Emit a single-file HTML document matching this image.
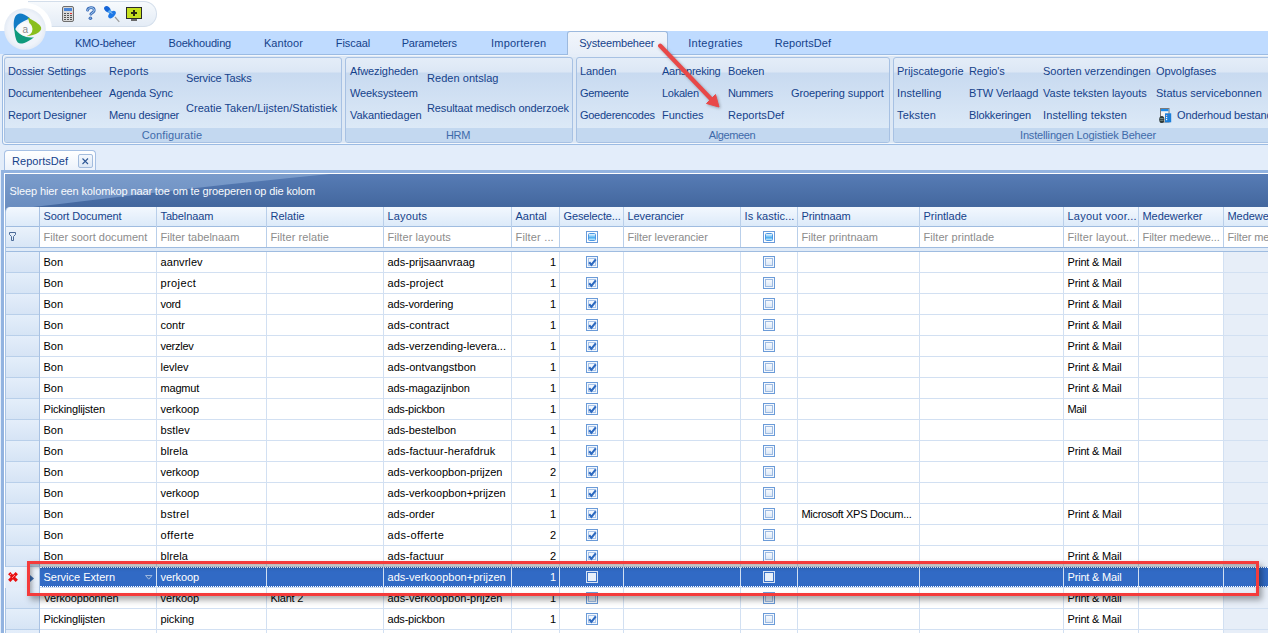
<!DOCTYPE html>
<html><head><meta charset="utf-8"><title>ReportsDef</title><style>
*{margin:0;padding:0;box-sizing:border-box}
html,body{width:1268px;height:633px;overflow:hidden;background:#fff;font-family:"Liberation Sans", sans-serif;font-size:11px}
.a{position:absolute;white-space:nowrap}
.t{position:absolute;white-space:nowrap;line-height:13px;height:13px}
.rb{color:#15428B;letter-spacing:-0.25px}
</style></head>
<body>
<div class="a" style="left:0;top:0;width:1268px;height:31px;background:#fff;overflow:hidden"><div class="a" style="left:28px;top:1px;width:129px;height:26px;border:1px solid #D3DEEB;border-left:none;border-radius:0 13px 13px 0;background:linear-gradient(#F7FAFD,#E4ECF6)"></div><div class="a" style="left:-1px;top:3px;width:53px;height:53px;border-radius:50%;background:#fff"></div></div><svg class="a" style="left:60px;top:5px" width="90" height="18" viewBox="0 0 90 18">
<rect x="2.5" y="1.5" width="11" height="15" rx="1.5" fill="#D8D8D8" stroke="#6E6E6E"/>
<rect x="4" y="3" width="8" height="3" fill="#4A86D8"/>
<g fill="#555"><rect x="4" y="8" width="2" height="1"/><rect x="7" y="8" width="2" height="1"/><rect x="10" y="8" width="2" height="1" fill="#E03030"/>
<rect x="4" y="10" width="2" height="1"/><rect x="7" y="10" width="2" height="1"/><rect x="10" y="10" width="2" height="1"/>
<rect x="4" y="12" width="2" height="1"/><rect x="7" y="12" width="2" height="1"/><rect x="10" y="12" width="2" height="1"/>
<rect x="4" y="14" width="2" height="1"/><rect x="7" y="14" width="2" height="1"/><rect x="10" y="14" width="2" height="1"/></g>
<path d="M27.5 5.2 C28 2.3 33.5 1.5 34.2 4.8 C34.7 7.5 31.2 7.6 30.8 9.2" fill="none" stroke="#3C6CB8" stroke-width="2.8" stroke-linecap="round"/>
<path d="M27.5 5.2 C28 2.3 33.5 1.5 34.2 4.8 C34.7 7.5 31.2 7.6 30.8 9.2" fill="none" stroke="#B5DAF6" stroke-width="1" stroke-linecap="round"/>
<circle cx="30.4" cy="13.3" r="1.8" fill="#3C6CB8"/><circle cx="30.2" cy="13.1" r="0.7" fill="#B5DAF6"/>
<line x1="55" y1="12" x2="59.3" y2="16.8" stroke="#9A9A9A" stroke-width="1.2"/>
<ellipse cx="47.3" cy="4.2" rx="3.6" ry="2.6" transform="rotate(45 47.3 4.2)" fill="#1565D8"/>
<path d="M47.5 6.5 L50 4.5 L53.5 8 L51 10.5 Z" fill="#4DA3F0"/>
<ellipse cx="52" cy="9.6" rx="4.6" ry="2.6" transform="rotate(-45 52 9.6)" fill="#1E78E6"/>
<path d="M50 6.5 L52.2 8.7" stroke="#D8F0FF" stroke-width="0.8"/>
<rect x="66.5" y="2.5" width="15" height="11" fill="#C6E01E" stroke="#2A2A2A"/>
<path d="M73 5h2v2h2v2h-2v2h-2v-2h-2V7h2z" fill="#2A2A10"/>
<rect x="71" y="14" width="6" height="2" fill="#6A6A6A"/>
</svg><svg class="a" style="left:0;top:0;z-index:5" width="50" height="55" viewBox="0 0 50 55">
<defs><radialGradient id="lg" cx="50%" cy="50%" r="50%"><stop offset="80%" stop-color="#EFF3FA"/><stop offset="100%" stop-color="#E4EBF5"/></radialGradient></defs>
<circle cx="25" cy="29" r="20.8" fill="url(#lg)"/>
<path d="M14.5 31 C13 24 13.5 16.5 17.5 14.2 C20.5 12.5 25 14.5 30 18.2 C26 20 21 22 18 25 C16.5 26.5 15.5 28.5 14.5 31 Z" fill="#127CC6"/>
<path d="M27.5 17.5 C32 19.5 37.5 22.5 40.2 25.8 C42 28 41.5 30.5 38.5 32.5 C35.5 34.5 30.5 36 26.5 36.2 C30 32.5 31 24 27.5 17.5 Z" fill="#8ABF1E"/>
<path d="M14.2 27.5 C14.5 33 15.5 40 17.8 42.5 C20 44.5 24 43.5 28 41.2 C30.5 39.8 32.5 38.5 34 37.2 C27 38.5 19 35.5 14.2 27.5 Z" fill="#0F9A7C"/>
<circle cx="25.5" cy="29" r="7" fill="#FAFBFC"/>
<text x="25.3" y="32.5" text-anchor="middle" font-family="Liberation Sans" font-size="10" fill="#8A8A8A">a</text>
</svg><div class="a" style="left:0;top:31px;width:1268px;height:24px;background:#BFDBFF"></div><div class="a" style="left:567px;top:31px;width:101px;height:27px;border:1px solid #9CB9DE;border-bottom:none;border-radius:3px 3px 0 0;background:linear-gradient(#F1F5FB,#E5EDF8)"></div><div class="t rb" style="left:75.0px;top:37px;letter-spacing:-0.222px">KMO-beheer</div><div class="t rb" style="left:168.5px;top:37px;letter-spacing:-0.15px">Boekhouding</div><div class="t rb" style="left:263.9px;top:37px;letter-spacing:0.083px">Kantoor</div><div class="t rb" style="left:335.8px;top:37px;letter-spacing:-0.083px">Fiscaal</div><div class="t rb" style="left:401.7px;top:37px;letter-spacing:-0.167px">Parameters</div><div class="t rb" style="left:491.0px;top:37px;letter-spacing:0.222px">Importeren</div><div class="t rb" style="left:579.2px;top:37px;letter-spacing:-0.15px">Systeembeheer</div><div class="t rb" style="left:688.2px;top:37px;letter-spacing:0.3px">Integraties</div><div class="t rb" style="left:774.8px;top:37px;letter-spacing:0.056px">ReportsDef</div><div class="a" style="left:0;top:54px;width:4px;height:92px;background:#E3EDFA"></div><div class="a" style="left:2px;top:54px;width:1270px;height:91px;border:1px solid #9BBBE3;border-radius:3px;background:#DDE8F5"></div><div class="a" style="left:3px;top:55px;width:1270px;height:89px;border:1px solid #F3F7FC;border-radius:3px"></div><div class="a" style="left:568px;top:54px;width:99px;height:3px;background:#E5EDF8"></div><div class="a" style="left:4px;top:57px;width:338px;height:86px;border:1px solid #A7C1E3;border-radius:3px;overflow:hidden;background:linear-gradient(#E4EDF8 0,#DCE7F5 14px,#C8DAF0 15px,#DCE9F7 70px)"><div class="a" style="left:0;top:70px;width:100%;height:15px;background:#C3D8F0"></div></div><div class="a" style="left:345px;top:57px;width:228px;height:86px;border:1px solid #A7C1E3;border-radius:3px;overflow:hidden;background:linear-gradient(#E4EDF8 0,#DCE7F5 14px,#C8DAF0 15px,#DCE9F7 70px)"><div class="a" style="left:0;top:70px;width:100%;height:15px;background:#C3D8F0"></div></div><div class="a" style="left:576px;top:57px;width:314px;height:86px;border:1px solid #A7C1E3;border-radius:3px;overflow:hidden;background:linear-gradient(#E4EDF8 0,#DCE7F5 14px,#C8DAF0 15px,#DCE9F7 70px)"><div class="a" style="left:0;top:70px;width:100%;height:15px;background:#C3D8F0"></div></div><div class="a" style="left:893px;top:57px;width:398px;height:86px;border:1px solid #A7C1E3;border-radius:3px;overflow:hidden;background:linear-gradient(#E4EDF8 0,#DCE7F5 14px,#C8DAF0 15px,#DCE9F7 70px)"><div class="a" style="left:0;top:70px;width:100%;height:15px;background:#C3D8F0"></div></div><div class="t" style="left:72px;width:200px;text-align:center;top:129px;color:#3E6AAA;letter-spacing:0.091px">Configuratie</div><div class="t" style="left:358px;width:200px;text-align:center;top:129px;color:#3E6AAA;letter-spacing:-0.4px">HRM</div><div class="t" style="left:632px;width:200px;text-align:center;top:129px;color:#3E6AAA;letter-spacing:-0.357px">Algemeen</div><div class="t" style="left:988px;width:200px;text-align:center;top:129px;color:#3E6AAA;letter-spacing:-0.161px">Instellingen Logistiek Beheer</div><div class="t rb" style="left:8px;top:65px;letter-spacing:-0.133px">Dossier Settings</div><div class="t rb" style="left:8px;top:87px;letter-spacing:-0.167px">Documentenbeheer</div><div class="t rb" style="left:8px;top:109px;letter-spacing:-0.107px">Report Designer</div><div class="t rb" style="left:109px;top:65px;letter-spacing:0.167px">Reports</div><div class="t rb" style="left:109px;top:87px;letter-spacing:-0.15px">Agenda Sync</div><div class="t rb" style="left:109px;top:109px;letter-spacing:-0.208px">Menu designer</div><div class="t rb" style="left:186px;top:72px;letter-spacing:-0.167px">Service Tasks</div><div class="t rb" style="left:186px;top:102px;letter-spacing:0.032px">Creatie Taken/Lijsten/Statistiek</div><div class="t rb" style="left:350px;top:65px;letter-spacing:-0.091px">Afwezigheden</div><div class="t rb" style="left:350px;top:87px;letter-spacing:-0.1px">Weeksysteem</div><div class="t rb" style="left:350px;top:109px;letter-spacing:-0.083px">Vakantiedagen</div><div class="t rb" style="left:427px;top:72px;letter-spacing:0.042px">Reden ontslag</div><div class="t rb" style="left:427px;top:102px;letter-spacing:-0.115px">Resultaat medisch onderzoek</div><div class="t rb" style="left:580px;top:65px;letter-spacing:-0.08px">Landen</div><div class="t rb" style="left:580px;top:87px;letter-spacing:-0.357px">Gemeente</div><div class="t rb" style="left:580px;top:109px;letter-spacing:-0.275px">Goederencodes</div><div class="t rb" style="left:662px;top:65px;letter-spacing:-0.25px">Aanspreking</div><div class="t rb" style="left:662px;top:87px;letter-spacing:-0.25px">Lokalen</div><div class="t rb" style="left:662px;top:109px;letter-spacing:0.0px">Functies</div><div class="t rb" style="left:728px;top:65px;letter-spacing:-0.2px">Boeken</div><div class="t rb" style="left:728px;top:87px;letter-spacing:-0.4px">Nummers</div><div class="t rb" style="left:728px;top:109px;letter-spacing:0.056px">ReportsDef</div><div class="t rb" style="left:791px;top:87px;letter-spacing:-0.118px">Groepering support</div><div class="t rb" style="left:897px;top:65px;letter-spacing:0.0px">Prijscategorie</div><div class="t rb" style="left:897px;top:87px;letter-spacing:0.111px">Instelling</div><div class="t rb" style="left:897px;top:109px;letter-spacing:0.167px">Teksten</div><div class="t rb" style="left:969px;top:65px;letter-spacing:-0.083px">Regio&#x27;s</div><div class="t rb" style="left:969px;top:87px;letter-spacing:-0.136px">BTW Verlaagd</div><div class="t rb" style="left:969px;top:109px;letter-spacing:-0.136px">Blokkeringen</div><div class="t rb" style="left:1043px;top:65px;letter-spacing:0.0px">Soorten verzendingen</div><div class="t rb" style="left:1043px;top:87px;letter-spacing:0.0px">Vaste teksten layouts</div><div class="t rb" style="left:1043px;top:109px;letter-spacing:0.118px">Instelling teksten</div><div class="t rb" style="left:1156px;top:65px;letter-spacing:-0.1px">Opvolgfases</div><div class="t rb" style="left:1156px;top:87px;letter-spacing:0.0px">Status servicebonnen</div><div class="t rb" style="left:1177px;top:109px;letter-spacing:-0.1px">Onderhoud bestanden</div><svg class="a" style="left:1158px;top:107px" width="15" height="17" viewBox="0 0 15 17"><rect x="2.5" y="1.5" width="8.5" height="13.5" fill="#F2F2F2" stroke="#7A7A7A"/><rect x="3" y="2" width="7.5" height="2.2" fill="#1E8BE8"/><rect x="7" y="6.3" width="6.2" height="9" fill="#1C7FDA"/><rect x="8" y="8" width="1.2" height="1.2" fill="#F0B0B0"/><rect x="8" y="10" width="1.2" height="1.2" fill="#fff"/><rect x="8" y="12" width="1.2" height="1.2" fill="#fff"/><ellipse cx="3.8" cy="12.5" rx="2.6" ry="3.6" fill="#2E3A3A"/><path d="M2.2 11.5 H5.5 M2.2 13.3 H5.5" stroke="#9AB0A8" stroke-width="0.7"/></svg><svg class="a" style="left:650px;top:38px;filter:drop-shadow(1.5px 1.5px 1.5px rgba(0,0,0,0.3))" width="80" height="80" viewBox="0 0 80 80">
<line x1="10.2" y1="7.8" x2="61" y2="61" stroke="#E84848" stroke-width="4.3" stroke-linecap="round"/>
<path d="M69 69 L56.5 65.5 L65.5 56.5 Z" fill="#E84848" stroke="#E84848" stroke-width="1" stroke-linejoin="round"/>
</svg><div class="a" style="left:0;top:145px;width:1268px;height:488px;background:#E3EDFA"></div><div class="a" style="left:4px;top:150px;width:92px;height:22px;border:1px solid #A6C0E4;border-bottom:none;border-radius:4px 4px 0 0;background:linear-gradient(#FFFFFF,#EAF1FB)"></div><div class="t" style="left:12px;top:155px;color:#15428B;letter-spacing:0.05px">ReportsDef</div><div class="a" style="left:78px;top:154px;width:15px;height:14px;border:1px solid #A3BCDD;border-radius:2px;background:linear-gradient(#F4F8FD,#DDE8F6)"></div><svg class="a" style="left:78px;top:154px" width="15" height="14"><path d="M4.5 4.5 L10 10 M10 4.5 L4.5 10" stroke="#2F5896" stroke-width="1.1"/></svg><div class="a" style="left:1px;top:170px;width:1280px;height:470px;border:3px solid #92B3E0;border-right:none;border-bottom:none"></div><div class="a" style="left:4px;top:173px;width:1280px;height:470px;background:#fff"></div><div class="a" style="left:5px;top:174px;width:1263px;height:33px;overflow:hidden;background:linear-gradient(#577CB5,#43679E)"><svg class="a" style="left:0;top:0" width="1263" height="33"><defs><linearGradient id="gl" x1="0" y1="0" x2="0" y2="1"><stop offset="0" stop-color="#7B9CCB"/><stop offset="1" stop-color="#6A8DC0"/></linearGradient></defs><path d="M0 0 H325 C220 10 120 22 28 33 H0 Z" fill="url(#gl)"/></svg></div><div class="t" style="left:9.5px;top:185px;color:#F8FAFD;letter-spacing:-0.133px">Sleep hier een kolomkop naar toe om te groeperen op die kolom</div><div class="a" style="left:5px;top:206px;width:6px;height:6px;background:#6C8EC1"></div><div class="a" style="left:5px;top:207px;width:1263px;height:20px;background:linear-gradient(#F3F8FE,#DCEAF9);border-bottom:1px solid #9FBCE0;border-left:1px solid #A9C4E4;border-top-left-radius:5px"></div><div class="a" style="left:5px;top:227px;width:1263px;height:21px;background:#fff;border-bottom:1px solid #9FBCE0"></div><div class="a" style="left:5px;top:227px;width:34px;height:21px;background:linear-gradient(#EAF2FB,#D8E6F6);border-bottom:1px solid #9FBCE0"></div><div class="a" style="left:5px;top:248px;width:1263px;height:4px;background:#E0EBF8;border-bottom:1px solid #9FBCE0"></div><div class="a" style="left:39px;top:207px;width:1px;height:40px;background:#B9CFEA"></div><div class="a" style="left:156px;top:207px;width:1px;height:40px;background:#B9CFEA"></div><div class="a" style="left:266px;top:207px;width:1px;height:40px;background:#B9CFEA"></div><div class="a" style="left:383px;top:207px;width:1px;height:40px;background:#B9CFEA"></div><div class="a" style="left:511px;top:207px;width:1px;height:40px;background:#B9CFEA"></div><div class="a" style="left:559px;top:207px;width:1px;height:40px;background:#B9CFEA"></div><div class="a" style="left:623px;top:207px;width:1px;height:40px;background:#B9CFEA"></div><div class="a" style="left:740px;top:207px;width:1px;height:40px;background:#B9CFEA"></div><div class="a" style="left:797px;top:207px;width:1px;height:40px;background:#B9CFEA"></div><div class="a" style="left:919px;top:207px;width:1px;height:40px;background:#B9CFEA"></div><div class="a" style="left:1063px;top:207px;width:1px;height:40px;background:#B9CFEA"></div><div class="a" style="left:1138px;top:207px;width:1px;height:40px;background:#B9CFEA"></div><div class="a" style="left:1223px;top:207px;width:1px;height:40px;background:#B9CFEA"></div><div class="t" style="left:43.5px;top:210px;color:#15428B;letter-spacing:-0.115px">Soort Document</div><div class="t" style="left:160.5px;top:210px;color:#15428B;letter-spacing:-0.125px">Tabelnaam</div><div class="t" style="left:270.5px;top:210px;color:#15428B;letter-spacing:0px">Relatie</div><div class="t" style="left:387.5px;top:210px;color:#15428B;letter-spacing:0.167px">Layouts</div><div class="t" style="left:515.5px;top:210px;color:#15428B;letter-spacing:0.0px">Aantal</div><div class="t" style="left:563.5px;top:210px;color:#15428B;letter-spacing:-0.136px">Geselecte...</div><div class="t" style="left:627.5px;top:210px;color:#15428B;letter-spacing:-0.1px">Leverancier</div><div class="t" style="left:744.5px;top:210px;color:#15428B;letter-spacing:0.091px">Is kastic...</div><div class="t" style="left:801.5px;top:210px;color:#15428B;letter-spacing:-0.125px">Printnaam</div><div class="t" style="left:923.5px;top:210px;color:#15428B;letter-spacing:0.0px">Printlade</div><div class="t" style="left:1067.5px;top:210px;color:#15428B;letter-spacing:0.231px">Layout voor...</div><div class="t" style="left:1142.5px;top:210px;color:#15428B;letter-spacing:-0.056px">Medewerker</div><div class="t" style="left:1227.5px;top:210px;color:#15428B;letter-spacing:-0.056px">Medewerker</div><div class="t" style="left:43.5px;top:231px;color:#8C8C8C;letter-spacing:0.025px">Filter soort document</div><div class="t" style="left:160.5px;top:231px;color:#8C8C8C;letter-spacing:0.0px">Filter tabelnaam</div><div class="t" style="left:270.5px;top:231px;color:#8C8C8C;letter-spacing:0.077px">Filter relatie</div><div class="t" style="left:387.5px;top:231px;color:#8C8C8C;letter-spacing:0.077px">Filter layouts</div><div class="t" style="left:515.5px;top:231px;color:#8C8C8C;letter-spacing:0.167px">Filter ...</div><div class="a" style="left:586px;top:231px;width:12px;height:12px;border:1px solid #6A9BDA;background:#fff"><div class="a" style="left:1px;top:1px;width:8px;height:8px;border-radius:1.5px;border:1px solid #4C98E4;background:linear-gradient(#E8F6FE 0,#9ED4F8 30%,#4FB0F2 60%,#C4ECFC 100%)"></div></div><div class="t" style="left:627.5px;top:231px;color:#8C8C8C;letter-spacing:-0.059px">Filter leverancier</div><div class="a" style="left:763px;top:231px;width:12px;height:12px;border:1px solid #6A9BDA;background:#fff"><div class="a" style="left:1px;top:1px;width:8px;height:8px;border-radius:1.5px;border:1px solid #4C98E4;background:linear-gradient(#E8F6FE 0,#9ED4F8 30%,#4FB0F2 60%,#C4ECFC 100%)"></div></div><div class="t" style="left:801.5px;top:231px;color:#8C8C8C;letter-spacing:0.0px">Filter printnaam</div><div class="t" style="left:923.5px;top:231px;color:#8C8C8C;letter-spacing:0.067px">Filter printlade</div><div class="t" style="left:1067.5px;top:231px;color:#8C8C8C;letter-spacing:0.133px">Filter layout...</div><div class="t" style="left:1142.5px;top:231px;color:#8C8C8C;letter-spacing:-0.067px">Filter medewe...</div><div class="t" style="left:1227.5px;top:231px;color:#8C8C8C;letter-spacing:-0.1px">Filter medewerker</div><svg class="a" style="left:8px;top:231px" width="10" height="11"><path d="M1.5 1.5h6v2l-2 2v4h-2v-4l-2-2z" fill="none" stroke="#4A6A98"/></svg><div class="a" style="left:39px;top:252px;width:1229px;height:21px;background:#fff;border-bottom:1px solid #D2E0F2"></div><div class="a" style="left:1223px;top:252px;width:45px;height:21px;background:#E7EEF8;border-bottom:1px solid #D2E0F2"></div><div class="a" style="left:5px;top:252px;width:34px;height:21px;background:linear-gradient(#E4EEFA,#D6E4F5);border-bottom:1px solid #B8CFEA"></div><div class="t" style="left:43.5px;top:256px;color:#000;letter-spacing:0.0px">Bon</div><div class="t" style="left:160.5px;top:256px;color:#000;letter-spacing:0.071px">aanvrlev</div><div class="t" style="left:387.5px;top:256px;color:#000;letter-spacing:0.0px">ads-prijsaanvraag</div><div class="t" style="left:1067.5px;top:256px;color:#000;letter-spacing:-0.182px">Print &amp; Mail</div><div class="t" style="left:511px;width:45px;text-align:right;top:256px;color:#000">1</div><div class="a" style="left:586px;top:256px;width:12px;height:12px;border:1px solid #6B9BD8;background:#F4F8FD"><div class="a" style="left:1px;top:1px;width:8px;height:8px;border:1px solid #A8C4EA;background:#F2F7FD"></div><svg class="a" style="left:1px;top:1px" width="9" height="9"><path d="M1.2 4.2 L3.4 6.8 L7.8 1.3" fill="none" stroke="#2C69C0" stroke-width="2.1"/></svg></div><div class="a" style="left:763px;top:256px;width:12px;height:12px;border:1px solid #6B9BD8;background:#F4F8FD"><div class="a" style="left:1px;top:1px;width:8px;height:8px;border:1px solid #9DBBE3;background:linear-gradient(#F6F9FD,#DCE8F6)"></div></div><div class="a" style="left:39px;top:273px;width:1229px;height:21px;background:#fff;border-bottom:1px solid #D2E0F2"></div><div class="a" style="left:1223px;top:273px;width:45px;height:21px;background:#E7EEF8;border-bottom:1px solid #D2E0F2"></div><div class="a" style="left:5px;top:273px;width:34px;height:21px;background:linear-gradient(#E4EEFA,#D6E4F5);border-bottom:1px solid #B8CFEA"></div><div class="t" style="left:43.5px;top:277px;color:#000;letter-spacing:0.0px">Bon</div><div class="t" style="left:160.5px;top:277px;color:#000;letter-spacing:0.4px">project</div><div class="t" style="left:387.5px;top:277px;color:#000;letter-spacing:0.15px">ads-project</div><div class="t" style="left:1067.5px;top:277px;color:#000;letter-spacing:-0.182px">Print &amp; Mail</div><div class="t" style="left:511px;width:45px;text-align:right;top:277px;color:#000">1</div><div class="a" style="left:586px;top:277px;width:12px;height:12px;border:1px solid #6B9BD8;background:#F4F8FD"><div class="a" style="left:1px;top:1px;width:8px;height:8px;border:1px solid #A8C4EA;background:#F2F7FD"></div><svg class="a" style="left:1px;top:1px" width="9" height="9"><path d="M1.2 4.2 L3.4 6.8 L7.8 1.3" fill="none" stroke="#2C69C0" stroke-width="2.1"/></svg></div><div class="a" style="left:763px;top:277px;width:12px;height:12px;border:1px solid #6B9BD8;background:#F4F8FD"><div class="a" style="left:1px;top:1px;width:8px;height:8px;border:1px solid #9DBBE3;background:linear-gradient(#F6F9FD,#DCE8F6)"></div></div><div class="a" style="left:39px;top:294px;width:1229px;height:21px;background:#fff;border-bottom:1px solid #D2E0F2"></div><div class="a" style="left:1223px;top:294px;width:45px;height:21px;background:#E7EEF8;border-bottom:1px solid #D2E0F2"></div><div class="a" style="left:5px;top:294px;width:34px;height:21px;background:linear-gradient(#E4EEFA,#D6E4F5);border-bottom:1px solid #B8CFEA"></div><div class="t" style="left:43.5px;top:298px;color:#000;letter-spacing:0.0px">Bon</div><div class="t" style="left:160.5px;top:298px;color:#000;letter-spacing:-0.333px">vord</div><div class="t" style="left:387.5px;top:298px;color:#000;letter-spacing:-0.125px">ads-vordering</div><div class="t" style="left:1067.5px;top:298px;color:#000;letter-spacing:-0.182px">Print &amp; Mail</div><div class="t" style="left:511px;width:45px;text-align:right;top:298px;color:#000">1</div><div class="a" style="left:586px;top:298px;width:12px;height:12px;border:1px solid #6B9BD8;background:#F4F8FD"><div class="a" style="left:1px;top:1px;width:8px;height:8px;border:1px solid #A8C4EA;background:#F2F7FD"></div><svg class="a" style="left:1px;top:1px" width="9" height="9"><path d="M1.2 4.2 L3.4 6.8 L7.8 1.3" fill="none" stroke="#2C69C0" stroke-width="2.1"/></svg></div><div class="a" style="left:763px;top:298px;width:12px;height:12px;border:1px solid #6B9BD8;background:#F4F8FD"><div class="a" style="left:1px;top:1px;width:8px;height:8px;border:1px solid #9DBBE3;background:linear-gradient(#F6F9FD,#DCE8F6)"></div></div><div class="a" style="left:39px;top:315px;width:1229px;height:21px;background:#fff;border-bottom:1px solid #D2E0F2"></div><div class="a" style="left:1223px;top:315px;width:45px;height:21px;background:#E7EEF8;border-bottom:1px solid #D2E0F2"></div><div class="a" style="left:5px;top:315px;width:34px;height:21px;background:linear-gradient(#E4EEFA,#D6E4F5);border-bottom:1px solid #B8CFEA"></div><div class="t" style="left:43.5px;top:319px;color:#000;letter-spacing:0.0px">Bon</div><div class="t" style="left:160.5px;top:319px;color:#000;letter-spacing:0px">contr</div><div class="t" style="left:387.5px;top:319px;color:#000;letter-spacing:0.091px">ads-contract</div><div class="t" style="left:1067.5px;top:319px;color:#000;letter-spacing:-0.182px">Print &amp; Mail</div><div class="t" style="left:511px;width:45px;text-align:right;top:319px;color:#000">1</div><div class="a" style="left:586px;top:319px;width:12px;height:12px;border:1px solid #6B9BD8;background:#F4F8FD"><div class="a" style="left:1px;top:1px;width:8px;height:8px;border:1px solid #A8C4EA;background:#F2F7FD"></div><svg class="a" style="left:1px;top:1px" width="9" height="9"><path d="M1.2 4.2 L3.4 6.8 L7.8 1.3" fill="none" stroke="#2C69C0" stroke-width="2.1"/></svg></div><div class="a" style="left:763px;top:319px;width:12px;height:12px;border:1px solid #6B9BD8;background:#F4F8FD"><div class="a" style="left:1px;top:1px;width:8px;height:8px;border:1px solid #9DBBE3;background:linear-gradient(#F6F9FD,#DCE8F6)"></div></div><div class="a" style="left:39px;top:336px;width:1229px;height:21px;background:#fff;border-bottom:1px solid #D2E0F2"></div><div class="a" style="left:1223px;top:336px;width:45px;height:21px;background:#E7EEF8;border-bottom:1px solid #D2E0F2"></div><div class="a" style="left:5px;top:336px;width:34px;height:21px;background:linear-gradient(#E4EEFA,#D6E4F5);border-bottom:1px solid #B8CFEA"></div><div class="t" style="left:43.5px;top:340px;color:#000;letter-spacing:0.0px">Bon</div><div class="t" style="left:160.5px;top:340px;color:#000;letter-spacing:-0.25px">verzlev</div><div class="t" style="left:387.5px;top:340px;color:#000;letter-spacing:0.022px">ads-verzending-levera...</div><div class="t" style="left:1067.5px;top:340px;color:#000;letter-spacing:-0.182px">Print &amp; Mail</div><div class="t" style="left:511px;width:45px;text-align:right;top:340px;color:#000">1</div><div class="a" style="left:586px;top:340px;width:12px;height:12px;border:1px solid #6B9BD8;background:#F4F8FD"><div class="a" style="left:1px;top:1px;width:8px;height:8px;border:1px solid #A8C4EA;background:#F2F7FD"></div><svg class="a" style="left:1px;top:1px" width="9" height="9"><path d="M1.2 4.2 L3.4 6.8 L7.8 1.3" fill="none" stroke="#2C69C0" stroke-width="2.1"/></svg></div><div class="a" style="left:763px;top:340px;width:12px;height:12px;border:1px solid #6B9BD8;background:#F4F8FD"><div class="a" style="left:1px;top:1px;width:8px;height:8px;border:1px solid #9DBBE3;background:linear-gradient(#F6F9FD,#DCE8F6)"></div></div><div class="a" style="left:39px;top:357px;width:1229px;height:21px;background:#fff;border-bottom:1px solid #D2E0F2"></div><div class="a" style="left:1223px;top:357px;width:45px;height:21px;background:#E7EEF8;border-bottom:1px solid #D2E0F2"></div><div class="a" style="left:5px;top:357px;width:34px;height:21px;background:linear-gradient(#E4EEFA,#D6E4F5);border-bottom:1px solid #B8CFEA"></div><div class="t" style="left:43.5px;top:361px;color:#000;letter-spacing:0.0px">Bon</div><div class="t" style="left:160.5px;top:361px;color:#000;letter-spacing:0px">levlev</div><div class="t" style="left:387.5px;top:361px;color:#000;letter-spacing:0.067px">ads-ontvangstbon</div><div class="t" style="left:1067.5px;top:361px;color:#000;letter-spacing:-0.182px">Print &amp; Mail</div><div class="t" style="left:511px;width:45px;text-align:right;top:361px;color:#000">1</div><div class="a" style="left:586px;top:361px;width:12px;height:12px;border:1px solid #6B9BD8;background:#F4F8FD"><div class="a" style="left:1px;top:1px;width:8px;height:8px;border:1px solid #A8C4EA;background:#F2F7FD"></div><svg class="a" style="left:1px;top:1px" width="9" height="9"><path d="M1.2 4.2 L3.4 6.8 L7.8 1.3" fill="none" stroke="#2C69C0" stroke-width="2.1"/></svg></div><div class="a" style="left:763px;top:361px;width:12px;height:12px;border:1px solid #6B9BD8;background:#F4F8FD"><div class="a" style="left:1px;top:1px;width:8px;height:8px;border:1px solid #9DBBE3;background:linear-gradient(#F6F9FD,#DCE8F6)"></div></div><div class="a" style="left:39px;top:378px;width:1229px;height:21px;background:#fff;border-bottom:1px solid #D2E0F2"></div><div class="a" style="left:1223px;top:378px;width:45px;height:21px;background:#E7EEF8;border-bottom:1px solid #D2E0F2"></div><div class="a" style="left:5px;top:378px;width:34px;height:21px;background:linear-gradient(#E4EEFA,#D6E4F5);border-bottom:1px solid #B8CFEA"></div><div class="t" style="left:43.5px;top:382px;color:#000;letter-spacing:0.0px">Bon</div><div class="t" style="left:160.5px;top:382px;color:#000;letter-spacing:-0.2px">magmut</div><div class="t" style="left:387.5px;top:382px;color:#000;letter-spacing:-0.107px">ads-magazijnbon</div><div class="t" style="left:1067.5px;top:382px;color:#000;letter-spacing:-0.182px">Print &amp; Mail</div><div class="t" style="left:511px;width:45px;text-align:right;top:382px;color:#000">1</div><div class="a" style="left:586px;top:382px;width:12px;height:12px;border:1px solid #6B9BD8;background:#F4F8FD"><div class="a" style="left:1px;top:1px;width:8px;height:8px;border:1px solid #A8C4EA;background:#F2F7FD"></div><svg class="a" style="left:1px;top:1px" width="9" height="9"><path d="M1.2 4.2 L3.4 6.8 L7.8 1.3" fill="none" stroke="#2C69C0" stroke-width="2.1"/></svg></div><div class="a" style="left:763px;top:382px;width:12px;height:12px;border:1px solid #6B9BD8;background:#F4F8FD"><div class="a" style="left:1px;top:1px;width:8px;height:8px;border:1px solid #9DBBE3;background:linear-gradient(#F6F9FD,#DCE8F6)"></div></div><div class="a" style="left:39px;top:399px;width:1229px;height:21px;background:#fff;border-bottom:1px solid #D2E0F2"></div><div class="a" style="left:1223px;top:399px;width:45px;height:21px;background:#E7EEF8;border-bottom:1px solid #D2E0F2"></div><div class="a" style="left:5px;top:399px;width:34px;height:21px;background:linear-gradient(#E4EEFA,#D6E4F5);border-bottom:1px solid #B8CFEA"></div><div class="t" style="left:43.5px;top:403px;color:#000;letter-spacing:-0.154px">Pickinglijsten</div><div class="t" style="left:160.5px;top:403px;color:#000;letter-spacing:-0.083px">verkoop</div><div class="t" style="left:387.5px;top:403px;color:#000;letter-spacing:-0.2px">ads-pickbon</div><div class="t" style="left:1067.5px;top:403px;color:#000;letter-spacing:-0.333px">Mail</div><div class="t" style="left:511px;width:45px;text-align:right;top:403px;color:#000">1</div><div class="a" style="left:586px;top:403px;width:12px;height:12px;border:1px solid #6B9BD8;background:#F4F8FD"><div class="a" style="left:1px;top:1px;width:8px;height:8px;border:1px solid #A8C4EA;background:#F2F7FD"></div><svg class="a" style="left:1px;top:1px" width="9" height="9"><path d="M1.2 4.2 L3.4 6.8 L7.8 1.3" fill="none" stroke="#2C69C0" stroke-width="2.1"/></svg></div><div class="a" style="left:763px;top:403px;width:12px;height:12px;border:1px solid #6B9BD8;background:#F4F8FD"><div class="a" style="left:1px;top:1px;width:8px;height:8px;border:1px solid #9DBBE3;background:linear-gradient(#F6F9FD,#DCE8F6)"></div></div><div class="a" style="left:39px;top:420px;width:1229px;height:21px;background:#fff;border-bottom:1px solid #D2E0F2"></div><div class="a" style="left:1223px;top:420px;width:45px;height:21px;background:#E7EEF8;border-bottom:1px solid #D2E0F2"></div><div class="a" style="left:5px;top:420px;width:34px;height:21px;background:linear-gradient(#E4EEFA,#D6E4F5);border-bottom:1px solid #B8CFEA"></div><div class="t" style="left:43.5px;top:424px;color:#000;letter-spacing:0.0px">Bon</div><div class="t" style="left:160.5px;top:424px;color:#000;letter-spacing:0.1px">bstlev</div><div class="t" style="left:387.5px;top:424px;color:#000;letter-spacing:-0.042px">ads-bestelbon</div><div class="t" style="left:511px;width:45px;text-align:right;top:424px;color:#000">1</div><div class="a" style="left:586px;top:424px;width:12px;height:12px;border:1px solid #6B9BD8;background:#F4F8FD"><div class="a" style="left:1px;top:1px;width:8px;height:8px;border:1px solid #A8C4EA;background:#F2F7FD"></div><svg class="a" style="left:1px;top:1px" width="9" height="9"><path d="M1.2 4.2 L3.4 6.8 L7.8 1.3" fill="none" stroke="#2C69C0" stroke-width="2.1"/></svg></div><div class="a" style="left:763px;top:424px;width:12px;height:12px;border:1px solid #6B9BD8;background:#F4F8FD"><div class="a" style="left:1px;top:1px;width:8px;height:8px;border:1px solid #9DBBE3;background:linear-gradient(#F6F9FD,#DCE8F6)"></div></div><div class="a" style="left:39px;top:441px;width:1229px;height:21px;background:#fff;border-bottom:1px solid #D2E0F2"></div><div class="a" style="left:1223px;top:441px;width:45px;height:21px;background:#E7EEF8;border-bottom:1px solid #D2E0F2"></div><div class="a" style="left:5px;top:441px;width:34px;height:21px;background:linear-gradient(#E4EEFA,#D6E4F5);border-bottom:1px solid #B8CFEA"></div><div class="t" style="left:43.5px;top:445px;color:#000;letter-spacing:0.0px">Bon</div><div class="t" style="left:160.5px;top:445px;color:#000;letter-spacing:0.1px">blrela</div><div class="t" style="left:387.5px;top:445px;color:#000;letter-spacing:0.125px">ads-factuur-herafdruk</div><div class="t" style="left:1067.5px;top:445px;color:#000;letter-spacing:-0.182px">Print &amp; Mail</div><div class="t" style="left:511px;width:45px;text-align:right;top:445px;color:#000">1</div><div class="a" style="left:586px;top:445px;width:12px;height:12px;border:1px solid #6B9BD8;background:#F4F8FD"><div class="a" style="left:1px;top:1px;width:8px;height:8px;border:1px solid #A8C4EA;background:#F2F7FD"></div><svg class="a" style="left:1px;top:1px" width="9" height="9"><path d="M1.2 4.2 L3.4 6.8 L7.8 1.3" fill="none" stroke="#2C69C0" stroke-width="2.1"/></svg></div><div class="a" style="left:763px;top:445px;width:12px;height:12px;border:1px solid #6B9BD8;background:#F4F8FD"><div class="a" style="left:1px;top:1px;width:8px;height:8px;border:1px solid #9DBBE3;background:linear-gradient(#F6F9FD,#DCE8F6)"></div></div><div class="a" style="left:39px;top:462px;width:1229px;height:21px;background:#fff;border-bottom:1px solid #D2E0F2"></div><div class="a" style="left:1223px;top:462px;width:45px;height:21px;background:#E7EEF8;border-bottom:1px solid #D2E0F2"></div><div class="a" style="left:5px;top:462px;width:34px;height:21px;background:linear-gradient(#E4EEFA,#D6E4F5);border-bottom:1px solid #B8CFEA"></div><div class="t" style="left:43.5px;top:466px;color:#000;letter-spacing:0.0px">Bon</div><div class="t" style="left:160.5px;top:466px;color:#000;letter-spacing:-0.083px">verkoop</div><div class="t" style="left:387.5px;top:466px;color:#000;letter-spacing:0.0px">ads-verkoopbon-prijzen</div><div class="t" style="left:511px;width:45px;text-align:right;top:466px;color:#000">2</div><div class="a" style="left:586px;top:466px;width:12px;height:12px;border:1px solid #6B9BD8;background:#F4F8FD"><div class="a" style="left:1px;top:1px;width:8px;height:8px;border:1px solid #A8C4EA;background:#F2F7FD"></div><svg class="a" style="left:1px;top:1px" width="9" height="9"><path d="M1.2 4.2 L3.4 6.8 L7.8 1.3" fill="none" stroke="#2C69C0" stroke-width="2.1"/></svg></div><div class="a" style="left:763px;top:466px;width:12px;height:12px;border:1px solid #6B9BD8;background:#F4F8FD"><div class="a" style="left:1px;top:1px;width:8px;height:8px;border:1px solid #9DBBE3;background:linear-gradient(#F6F9FD,#DCE8F6)"></div></div><div class="a" style="left:39px;top:483px;width:1229px;height:21px;background:#fff;border-bottom:1px solid #D2E0F2"></div><div class="a" style="left:1223px;top:483px;width:45px;height:21px;background:#E7EEF8;border-bottom:1px solid #D2E0F2"></div><div class="a" style="left:5px;top:483px;width:34px;height:21px;background:linear-gradient(#E4EEFA,#D6E4F5);border-bottom:1px solid #B8CFEA"></div><div class="t" style="left:43.5px;top:487px;color:#000;letter-spacing:0.0px">Bon</div><div class="t" style="left:160.5px;top:487px;color:#000;letter-spacing:-0.083px">verkoop</div><div class="t" style="left:387.5px;top:487px;color:#000;letter-spacing:0.024px">ads-verkoopbon+prijzen</div><div class="t" style="left:511px;width:45px;text-align:right;top:487px;color:#000">1</div><div class="a" style="left:586px;top:487px;width:12px;height:12px;border:1px solid #6B9BD8;background:#F4F8FD"><div class="a" style="left:1px;top:1px;width:8px;height:8px;border:1px solid #A8C4EA;background:#F2F7FD"></div><svg class="a" style="left:1px;top:1px" width="9" height="9"><path d="M1.2 4.2 L3.4 6.8 L7.8 1.3" fill="none" stroke="#2C69C0" stroke-width="2.1"/></svg></div><div class="a" style="left:763px;top:487px;width:12px;height:12px;border:1px solid #6B9BD8;background:#F4F8FD"><div class="a" style="left:1px;top:1px;width:8px;height:8px;border:1px solid #9DBBE3;background:linear-gradient(#F6F9FD,#DCE8F6)"></div></div><div class="a" style="left:39px;top:504px;width:1229px;height:21px;background:#fff;border-bottom:1px solid #D2E0F2"></div><div class="a" style="left:1223px;top:504px;width:45px;height:21px;background:#E7EEF8;border-bottom:1px solid #D2E0F2"></div><div class="a" style="left:5px;top:504px;width:34px;height:21px;background:linear-gradient(#E4EEFA,#D6E4F5);border-bottom:1px solid #B8CFEA"></div><div class="t" style="left:43.5px;top:508px;color:#000;letter-spacing:0.0px">Bon</div><div class="t" style="left:160.5px;top:508px;color:#000;letter-spacing:0.3px">bstrel</div><div class="t" style="left:387.5px;top:508px;color:#000;letter-spacing:0.0px">ads-order</div><div class="t" style="left:801.5px;top:508px;color:#000;letter-spacing:-0.31px">Microsoft XPS Docum...</div><div class="t" style="left:1067.5px;top:508px;color:#000;letter-spacing:-0.182px">Print &amp; Mail</div><div class="t" style="left:511px;width:45px;text-align:right;top:508px;color:#000">1</div><div class="a" style="left:586px;top:508px;width:12px;height:12px;border:1px solid #6B9BD8;background:#F4F8FD"><div class="a" style="left:1px;top:1px;width:8px;height:8px;border:1px solid #A8C4EA;background:#F2F7FD"></div><svg class="a" style="left:1px;top:1px" width="9" height="9"><path d="M1.2 4.2 L3.4 6.8 L7.8 1.3" fill="none" stroke="#2C69C0" stroke-width="2.1"/></svg></div><div class="a" style="left:763px;top:508px;width:12px;height:12px;border:1px solid #6B9BD8;background:#F4F8FD"><div class="a" style="left:1px;top:1px;width:8px;height:8px;border:1px solid #9DBBE3;background:linear-gradient(#F6F9FD,#DCE8F6)"></div></div><div class="a" style="left:39px;top:525px;width:1229px;height:21px;background:#fff;border-bottom:1px solid #D2E0F2"></div><div class="a" style="left:1223px;top:525px;width:45px;height:21px;background:#E7EEF8;border-bottom:1px solid #D2E0F2"></div><div class="a" style="left:5px;top:525px;width:34px;height:21px;background:linear-gradient(#E4EEFA,#D6E4F5);border-bottom:1px solid #B8CFEA"></div><div class="t" style="left:43.5px;top:529px;color:#000;letter-spacing:0.0px">Bon</div><div class="t" style="left:160.5px;top:529px;color:#000;letter-spacing:0.4px">offerte</div><div class="t" style="left:387.5px;top:529px;color:#000;letter-spacing:0.4px">ads-offerte</div><div class="t" style="left:511px;width:45px;text-align:right;top:529px;color:#000">2</div><div class="a" style="left:586px;top:529px;width:12px;height:12px;border:1px solid #6B9BD8;background:#F4F8FD"><div class="a" style="left:1px;top:1px;width:8px;height:8px;border:1px solid #A8C4EA;background:#F2F7FD"></div><svg class="a" style="left:1px;top:1px" width="9" height="9"><path d="M1.2 4.2 L3.4 6.8 L7.8 1.3" fill="none" stroke="#2C69C0" stroke-width="2.1"/></svg></div><div class="a" style="left:763px;top:529px;width:12px;height:12px;border:1px solid #6B9BD8;background:#F4F8FD"><div class="a" style="left:1px;top:1px;width:8px;height:8px;border:1px solid #9DBBE3;background:linear-gradient(#F6F9FD,#DCE8F6)"></div></div><div class="a" style="left:39px;top:546px;width:1229px;height:21px;background:#fff;border-bottom:1px solid #D2E0F2"></div><div class="a" style="left:1223px;top:546px;width:45px;height:21px;background:#E7EEF8;border-bottom:1px solid #D2E0F2"></div><div class="a" style="left:5px;top:546px;width:34px;height:21px;background:linear-gradient(#E4EEFA,#D6E4F5);border-bottom:1px solid #B8CFEA"></div><div class="t" style="left:43.5px;top:550px;color:#000;letter-spacing:0.0px">Bon</div><div class="t" style="left:160.5px;top:550px;color:#000;letter-spacing:0.1px">blrela</div><div class="t" style="left:387.5px;top:550px;color:#000;letter-spacing:0.15px">ads-factuur</div><div class="t" style="left:1067.5px;top:550px;color:#000;letter-spacing:-0.182px">Print &amp; Mail</div><div class="t" style="left:511px;width:45px;text-align:right;top:550px;color:#000">2</div><div class="a" style="left:586px;top:550px;width:12px;height:12px;border:1px solid #6B9BD8;background:#F4F8FD"><div class="a" style="left:1px;top:1px;width:8px;height:8px;border:1px solid #A8C4EA;background:#F2F7FD"></div><svg class="a" style="left:1px;top:1px" width="9" height="9"><path d="M1.2 4.2 L3.4 6.8 L7.8 1.3" fill="none" stroke="#2C69C0" stroke-width="2.1"/></svg></div><div class="a" style="left:763px;top:550px;width:12px;height:12px;border:1px solid #6B9BD8;background:#F4F8FD"><div class="a" style="left:1px;top:1px;width:8px;height:8px;border:1px solid #9DBBE3;background:linear-gradient(#F6F9FD,#DCE8F6)"></div></div><div class="a" style="left:39px;top:567px;width:1229px;height:21px;background:#316AC5;border-bottom:1px solid #D2E0F2"></div><div class="a" style="left:5px;top:567px;width:34px;height:21px;background:linear-gradient(#EDF4FC,#E2ECF8);border-bottom:1px solid #B8CFEA"></div><div class="t" style="left:43.5px;top:571px;color:#fff;letter-spacing:0.0px">Service Extern</div><div class="t" style="left:160.5px;top:571px;color:#fff;letter-spacing:-0.083px">verkoop</div><div class="t" style="left:387.5px;top:571px;color:#fff;letter-spacing:0.024px">ads-verkoopbon+prijzen</div><div class="t" style="left:1067.5px;top:571px;color:#fff;letter-spacing:-0.182px">Print &amp; Mail</div><div class="t" style="left:511px;width:45px;text-align:right;top:571px;color:#fff">1</div><div class="a" style="left:586px;top:571px;width:12px;height:12px;border:1px solid #D8E4F4;background:#3A72C8"><div class="a" style="left:1px;top:1px;width:8px;height:8px;background:#E8F0FA"></div></div><div class="a" style="left:763px;top:571px;width:12px;height:12px;border:1px solid #D8E4F4;background:#3A72C8"><div class="a" style="left:1px;top:1px;width:8px;height:8px;background:#E8F0FA"></div></div><div class="a" style="left:39px;top:588px;width:1229px;height:21px;background:#fff;border-bottom:1px solid #D2E0F2"></div><div class="a" style="left:1223px;top:588px;width:45px;height:21px;background:#E7EEF8;border-bottom:1px solid #D2E0F2"></div><div class="a" style="left:5px;top:588px;width:34px;height:21px;background:linear-gradient(#E4EEFA,#D6E4F5);border-bottom:1px solid #B8CFEA"></div><div class="t" style="left:43.5px;top:592px;color:#000;letter-spacing:-0.167px">Verkoopbonnen</div><div class="t" style="left:160.5px;top:592px;color:#000;letter-spacing:-0.083px">verkoop</div><div class="t" style="left:270.5px;top:592px;color:#000;letter-spacing:-0.25px">Klant 2</div><div class="t" style="left:387.5px;top:592px;color:#000;letter-spacing:0.0px">ads-verkoopbon-prijzen</div><div class="t" style="left:1067.5px;top:592px;color:#000;letter-spacing:-0.182px">Print &amp; Mail</div><div class="t" style="left:511px;width:45px;text-align:right;top:592px;color:#000">1</div><div class="a" style="left:586px;top:592px;width:12px;height:12px;border:1px solid #6B9BD8;background:#F4F8FD"><div class="a" style="left:1px;top:1px;width:8px;height:8px;border:1px solid #9DBBE3;background:linear-gradient(#F6F9FD,#DCE8F6)"></div></div><div class="a" style="left:763px;top:592px;width:12px;height:12px;border:1px solid #6B9BD8;background:#F4F8FD"><div class="a" style="left:1px;top:1px;width:8px;height:8px;border:1px solid #9DBBE3;background:linear-gradient(#F6F9FD,#DCE8F6)"></div></div><div class="a" style="left:39px;top:609px;width:1229px;height:21px;background:#fff;border-bottom:1px solid #D2E0F2"></div><div class="a" style="left:1223px;top:609px;width:45px;height:21px;background:#E7EEF8;border-bottom:1px solid #D2E0F2"></div><div class="a" style="left:5px;top:609px;width:34px;height:21px;background:linear-gradient(#E4EEFA,#D6E4F5);border-bottom:1px solid #B8CFEA"></div><div class="t" style="left:43.5px;top:613px;color:#000;letter-spacing:-0.154px">Pickinglijsten</div><div class="t" style="left:160.5px;top:613px;color:#000;letter-spacing:-0.1px">picking</div><div class="t" style="left:387.5px;top:613px;color:#000;letter-spacing:-0.2px">ads-pickbon</div><div class="t" style="left:1067.5px;top:613px;color:#000;letter-spacing:-0.182px">Print &amp; Mail</div><div class="t" style="left:511px;width:45px;text-align:right;top:613px;color:#000">1</div><div class="a" style="left:586px;top:613px;width:12px;height:12px;border:1px solid #6B9BD8;background:#F4F8FD"><div class="a" style="left:1px;top:1px;width:8px;height:8px;border:1px solid #A8C4EA;background:#F2F7FD"></div><svg class="a" style="left:1px;top:1px" width="9" height="9"><path d="M1.2 4.2 L3.4 6.8 L7.8 1.3" fill="none" stroke="#2C69C0" stroke-width="2.1"/></svg></div><div class="a" style="left:763px;top:613px;width:12px;height:12px;border:1px solid #6B9BD8;background:#F4F8FD"><div class="a" style="left:1px;top:1px;width:8px;height:8px;border:1px solid #9DBBE3;background:linear-gradient(#F6F9FD,#DCE8F6)"></div></div><div class="a" style="left:39px;top:630px;width:1229px;height:21px;background:#fff;border-bottom:1px solid #D2E0F2"></div><div class="a" style="left:1223px;top:630px;width:45px;height:21px;background:#E7EEF8;border-bottom:1px solid #D2E0F2"></div><div class="a" style="left:5px;top:630px;width:34px;height:21px;background:linear-gradient(#E4EEFA,#D6E4F5);border-bottom:1px solid #B8CFEA"></div><div class="a" style="left:156px;top:252px;width:1px;height:400px;background:#D2E0F2"></div><div class="a" style="left:266px;top:252px;width:1px;height:400px;background:#D2E0F2"></div><div class="a" style="left:383px;top:252px;width:1px;height:400px;background:#D2E0F2"></div><div class="a" style="left:511px;top:252px;width:1px;height:400px;background:#D2E0F2"></div><div class="a" style="left:559px;top:252px;width:1px;height:400px;background:#D2E0F2"></div><div class="a" style="left:623px;top:252px;width:1px;height:400px;background:#D2E0F2"></div><div class="a" style="left:740px;top:252px;width:1px;height:400px;background:#D2E0F2"></div><div class="a" style="left:797px;top:252px;width:1px;height:400px;background:#D2E0F2"></div><div class="a" style="left:919px;top:252px;width:1px;height:400px;background:#D2E0F2"></div><div class="a" style="left:1063px;top:252px;width:1px;height:400px;background:#D2E0F2"></div><div class="a" style="left:1138px;top:252px;width:1px;height:400px;background:#D2E0F2"></div><div class="a" style="left:1223px;top:252px;width:1px;height:400px;background:#D2E0F2"></div><div class="a" style="left:39px;top:207px;width:1px;height:40px;background:#A9C2E3"></div><div class="a" style="left:39px;top:252px;width:1px;height:400px;background:#A9C2E3"></div><div class="a" style="left:5px;top:212px;width:1px;height:430px;background:#A9C4E4"></div><div class="a" style="left:5px;top:567px;width:34px;height:21px;background:linear-gradient(#EEF4FC,#E3ECF8)"></div><div class="a" style="left:40px;top:567px;width:1228px;height:20px;border-top:1px dotted #fff;border-bottom:1px dotted #fff"></div><svg class="a" style="left:144px;top:574px" width="10" height="8"><path d="M1.5 1.5 H8 L4.75 5.2 Z" fill="#3A6CB6" stroke="#9DB9E2"/></svg><svg class="a" style="left:7px;top:571px" width="12" height="12" viewBox="0 0 12 12"><path d="M2.2 2.2 L9.8 9.8 M9.8 2.2 L2.2 9.8" stroke="#E81010" stroke-width="3.2" stroke-linecap="butt"/><path d="M2.5 4.5 L4.5 2.5 M5 7 L8 4" stroke="#FFB0B0" stroke-width="0.8"/></svg><svg class="a" style="left:30px;top:575px" width="6" height="8"><path d="M0 0 L4 3.5 L0 7 Z" fill="#3D6BAE"/></svg><div class="a" style="left:27px;top:561px;width:1232px;height:35px;border:3px solid #F43B3B;box-shadow:3px 4px 6px rgba(0,0,0,0.35), inset 2px 3px 4px rgba(0,0,0,0.3)"></div>
</body></html>
